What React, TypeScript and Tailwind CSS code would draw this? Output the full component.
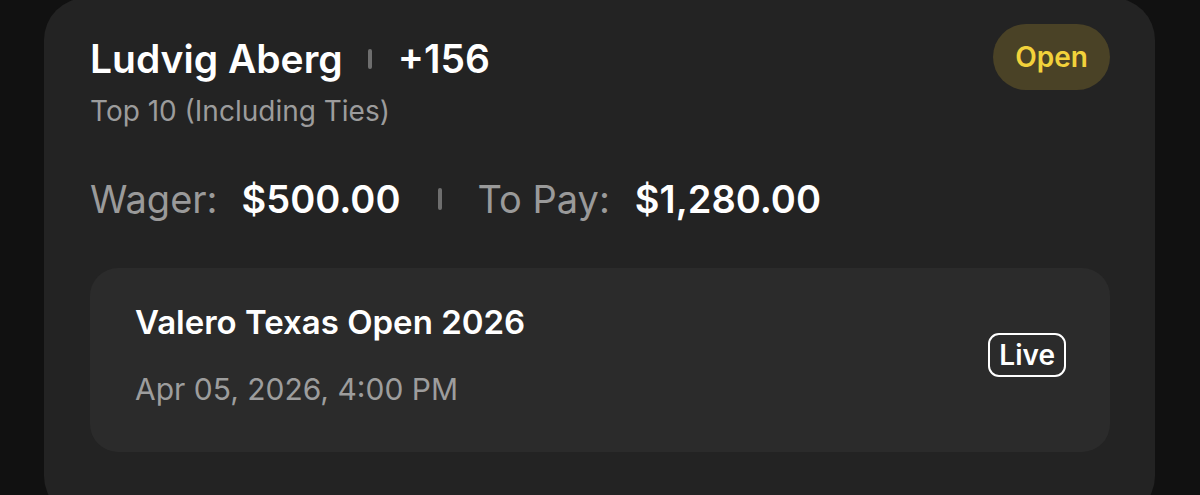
export default function App() {
  return (
    <div className="w-[1200px] h-[495px] overflow-hidden bg-[#111111] font-['Inter',sans-serif]">
      <div className="ml-[44px] mr-[45px] -mt-[2px] h-[520px] rounded-[42px] bg-[#232323] pl-[46px] pr-[45px] pt-[26px]">
        {/* header */}
        <div className="flex items-start justify-between">
          <div className="mt-[9px]">
            <div className="flex items-center">
              <span className="text-[39px] font-semibold leading-[52px] text-white">Ludvig Aberg</span>
              <span className="ml-[25px] mr-[26px] h-[20px] w-[4px] rounded-full bg-[#6e6e6e]" />
              <span className="text-[39px] font-semibold leading-[52px] text-white">+156</span>
            </div>
            <div className="mt-[9px] text-[28px] leading-[34px] text-[#9c9c9c]">Top 10 (Including Ties)</div>
          </div>
          <div className="flex h-[66px] items-center rounded-full bg-[#4a4226] px-[22px] text-[28px] font-semibold leading-none text-[#f2d23b]">
            Open
          </div>
        </div>

        {/* wager row */}
        <div className="mt-[46px] flex items-center text-[38px] leading-[50px]">
          <span className="text-[#9a9a9a]">Wager:</span>
          <span className="ml-[24px] font-semibold text-white">$500.00</span>
          <span className="ml-[38px] mr-[35px] h-[22px] w-[4px] rounded-full bg-[#6e6e6e]" />
          <span className="text-[#9a9a9a]">To Pay:</span>
          <span className="ml-[25px] font-semibold text-white">$1,280.00</span>
        </div>

        {/* event box */}
        <div className="mt-[44px] flex h-[184px] items-start justify-between rounded-[28px] bg-[#2b2b2b] pl-[45px] pr-[44px] pt-[34px]">
          <div>
            <div className="text-[33px] font-semibold leading-[40px] text-white">Valero Texas Open 2026</div>
            <div className="mt-[29px] text-[30px] leading-[36px] text-[#9d9d9d]">Apr 05, 2026, 4:00 PM</div>
          </div>
          <div className="mt-[31px] flex h-[44px] items-center rounded-[11px] border-2 border-white px-[9px] text-[28px] font-semibold leading-none text-white">
            Live
          </div>
        </div>
      </div>
    </div>
  );
}
